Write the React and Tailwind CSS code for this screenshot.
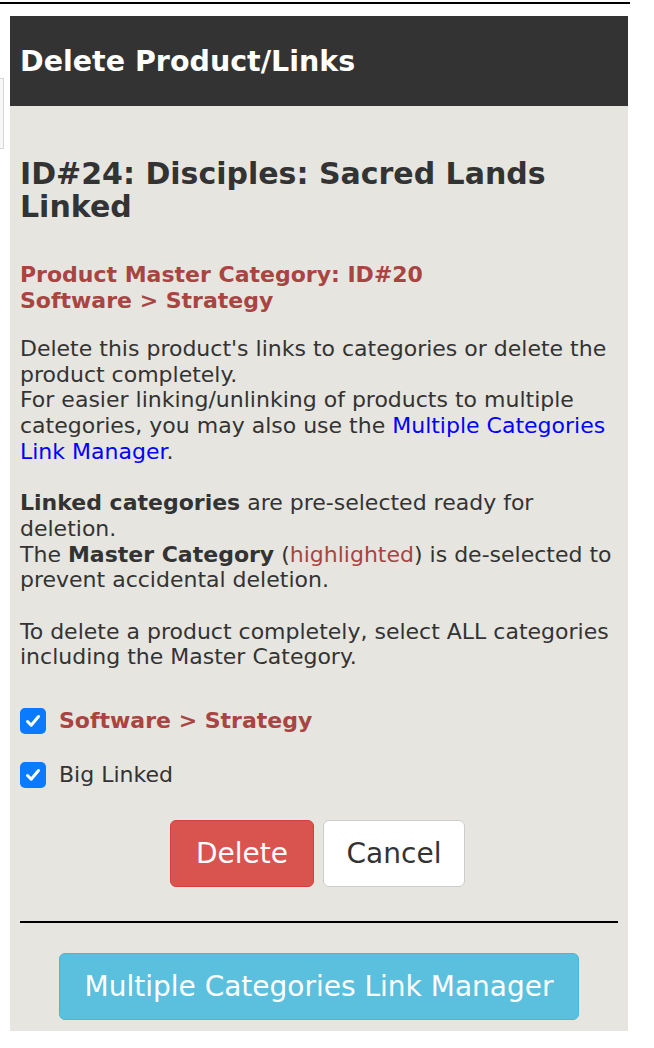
import React from 'react';

const CheckBox = () => (
  <span className="flex h-[26px] w-[26px] shrink-0 items-center justify-center rounded-[5px] bg-[#0a7bff]">
    <svg width="18" height="18" viewBox="0 0 18 18" fill="none">
      <path
        d="M3.5 9.5 L7.2 13.2 L14.5 4.5"
        stroke="white"
        strokeWidth="3"
        strokeLinecap="round"
        strokeLinejoin="round"
      />
    </svg>
  </span>
);

const CategoryRow = ({ label, master }) => (
  <label className="flex items-center gap-[13px]">
    <CheckBox />
    <span className={master ? 'font-bold text-[#a94442]' : 'text-[#333]'}>{label}</span>
  </label>
);

export default function App() {
  return (
    <div className="relative h-[1048px] w-[654px] overflow-hidden bg-white font-['DejaVu_Sans',sans-serif] text-[#333]">
      {/* page behind the modal */}
      <div className="absolute left-0 top-[78px] h-[71px] w-[4px] border-y border-r border-[#d6d6d6] bg-[#f7f7f7]" />

      <div className="mt-[2px] h-[2px] w-[630px] bg-black" />

      <div className="relative ml-[10px] mt-[12px] w-[618px] bg-[#e6e5e0] pb-[11px]">
        <div className="flex h-[90px] items-center bg-[#333] px-[10px]">
          <h2 className="pt-[2px] text-[28.5px] font-bold text-white">Delete Product/Links</h2>
        </div>

        <div className="px-[10px]">
          <h3 className="mt-[51px] text-[30px] font-bold leading-[33px] text-[#333]">
            ID#24: Disciples: Sacred Lands Linked
          </h3>

          <h4 className="mt-[39px] text-[22px] font-bold leading-[26px] text-[#a94442]">
            Product Master Category: ID#20
            <br />
            Software &gt; Strategy
          </h4>

          <p className="mt-[22px] text-[22px] leading-[25.7px]">
            Delete this product's links to categories or delete the product completely.
            <br />
            For easier linking/unlinking of products to multiple categories, you may also use the{' '}
            <a href="#" className="text-[#0000ff]">
              Multiple Categories Link Manager
            </a>
            .
            <br />
            <br />
            <strong>Linked categories</strong> are pre-selected ready for deletion.
            <br />
            The <strong>Master Category</strong> (<span className="text-[#a94442]">highlighted</span>) is
            de-selected to prevent accidental deletion.
            <br />
            <br />
            To delete a product completely, select ALL categories including the Master Category.
          </p>

          <div className="mt-[38px] flex flex-col gap-[28px] text-[22px] leading-[26px]">
            <CategoryRow label="Software > Strategy" master />
            <CategoryRow label="Big Linked" />
          </div>

          <div className="mt-[32px] flex justify-center gap-[9px] pr-[3px]">
            <button className="h-[67px] w-[144px] rounded-[6px] border border-[#d43f3a] bg-[#d9534f] text-[28px] text-white">
              Delete
            </button>
            <button className="h-[67px] w-[142px] rounded-[6px] border border-[#ccc] bg-white text-[28px] text-[#333]">
              Cancel
            </button>
          </div>

          <hr className="mt-[34px] border-t-2 border-black" />

          <div className="mt-[30px] flex justify-center">
            <button className="h-[67px] w-[520px] rounded-[6px] border border-[#46b8da] bg-[#5bc0de] text-[28px] text-white">
              Multiple Categories Link Manager
            </button>
          </div>
        </div>
      </div>
    </div>
  );
}
